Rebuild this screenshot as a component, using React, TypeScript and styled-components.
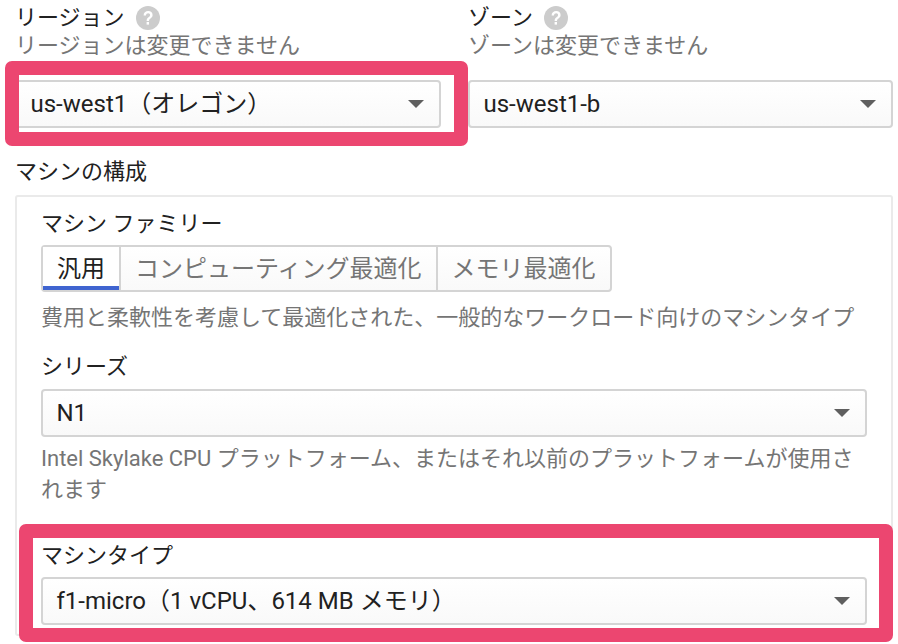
import React from "react";
import styled, { createGlobalStyle } from "styled-components";

const Global = createGlobalStyle`
  html, body { margin: 0; padding: 0; background: #fff; }
  body { font-family: Roboto, "Noto Sans CJK JP", sans-serif; color: #212121; }
  #root { width: 898px; height: 644px; overflow: hidden; }
`;

const Page = styled.div`
  width: 898px;
  height: 644px;
  box-sizing: border-box;
  padding: 5px 5px 0 15px;
  overflow: hidden;
`;

const TopRow = styled.div`
  display: grid;
  grid-template-columns: 426px 425px;
  column-gap: 27px;
`;

const FieldHead = styled.div`
  display: flex;
  align-items: center;
  gap: 11px;
  height: 26px;
`;

const Label = styled.div<{ $mt?: number; $mb?: number }>`
  font-size: 22px;
  line-height: 26px;
  height: 26px;
  white-space: nowrap;
  margin-top: ${(p) => p.$mt ?? 0}px;
  margin-bottom: ${(p) => p.$mb ?? 0}px;
`;

const Help = styled.div<{ $mt?: number }>`
  font-size: 22px;
  line-height: 31px;
  color: #757575;
  margin-top: ${(p) => p.$mt ?? 0}px;
`;

const SelectBox = styled.div<{ $mt?: number }>`
  position: relative;
  box-sizing: border-box;
  height: 48px;
  margin-top: ${(p) => p.$mt ?? 0}px;
  padding: 0 50px 0 13.5px;
  display: flex;
  align-items: center;
  border: 2px solid #d4d4d4;
  border-radius: 4px;
  background: linear-gradient(#ffffff, #f9f9f9);
  font-size: 24px;
  line-height: 28px;
  white-space: nowrap;
`;

const Caret = styled.svg`
  position: absolute;
  right: 15px;
  top: 18px;
  width: 16px;
  height: 8px;
  fill: #5f5f5f;
`;

const Panel = styled.div`
  box-sizing: border-box;
  margin-top: 10px;
  width: 878px;
  height: 441px;
  border: 2px solid #eaeaea;
  border-radius: 3px;
  padding: 14px 24px 0 24px;
`;

const Tabs = styled.div`
  display: inline-flex;
  margin-top: 8px;
  height: 47px;
  box-sizing: border-box;
  border: 2px solid #d4d4d4;
  border-radius: 4px;
  background: linear-gradient(#ffffff, #f9f9f9);
  vertical-align: top;
`;

const Tab = styled.div<{ $active?: boolean }>`
  position: relative;
  box-sizing: border-box;
  height: 100%;
  padding: 0 14px;
  display: flex;
  align-items: center;
  font-size: 24px;
  line-height: 28px;
  white-space: nowrap;
  color: ${(p) => (p.$active ? "#212121" : "#757575")};
  background: ${(p) => (p.$active ? "#fff" : "transparent")};
  border-left: ${(p) => (p.$active ? "none" : "2px solid #d4d4d4")};
  box-shadow: ${(p) => (p.$active ? "inset 0 -4px 0 #3f64d0" : "none")};
`;

const TabsLine = styled.div`
  height: 65px;
`;

const HighlightWrap = styled.div`
  position: relative;
`;

const Highlight = styled.div<{ $t: number; $r: number; $b: number; $l: number }>`
  position: absolute;
  top: ${(p) => p.$t}px;
  right: ${(p) => p.$r}px;
  bottom: ${(p) => p.$b}px;
  left: ${(p) => p.$l}px;
  box-sizing: border-box;
  border: 14px solid #ec4670;
  border-radius: 7px;
  pointer-events: none;
`;

const HelpCircle = () => (
  <svg width="24" height="24" viewBox="0 0 24 24">
    <circle cx="12" cy="12" r="12" fill="#cccccc" />
    <path
      d="M7.6 9.4c0-2.6 2-4.4 4.6-4.4 2.6 0 4.4 1.6 4.4 3.9 0 1.7-.9 2.6-2.1 3.5-1.2.9-1.5 1.3-1.5 2.6h-2.4c0-2 .6-2.8 1.9-3.8 1.1-.8 1.6-1.3 1.6-2.2 0-1-.8-1.7-1.9-1.7-1.2 0-2.1.8-2.2 2.1z"
      fill="#fff"
    />
    <rect x="10.6" y="16" width="2.4" height="2.6" fill="#fff" />
  </svg>
);

const Select = ({ children, mt }: { children: React.ReactNode; mt?: number }) => (
  <SelectBox $mt={mt}>
    {children}
    <Caret viewBox="0 0 16 8">
      <path d="M0 0h16L8 8z" />
    </Caret>
  </SelectBox>
);

export default function App() {
  return (
    <>
      <Global />
      <Page>
        <TopRow>
          <div>
            <FieldHead>
              <Label>リージョン</Label>
              <HelpCircle />
            </FieldHead>
            <Help $mt={-1}>リージョンは変更できません</Help>
            <HighlightWrap>
              <Select mt={19}>us-west1（オレゴン）</Select>
              <Highlight $t={-19} $r={-27} $b={-18} $l={-10} />
            </HighlightWrap>
          </div>
          <div>
            <FieldHead>
              <Label>ゾーン</Label>
              <HelpCircle />
            </FieldHead>
            <Help $mt={-1}>ゾーンは変更できません</Help>
            <Select mt={19}>us-west1-b</Select>
          </div>
        </TopRow>
        <Label $mt={31}>マシンの構成</Label>
        <Panel>
          <Label>マシン ファミリー</Label>
          <TabsLine>
            <Tabs>
              <Tab $active>汎用</Tab>
              <Tab>コンピューティング最適化</Tab>
              <Tab>メモリ最適化</Tab>
            </Tabs>
          </TabsLine>
          <Help>費用と柔軟性を考慮して最適化された、一般的なワークロード向けのマシンタイプ</Help>
          <Label $mt={21}>シリーズ</Label>
          <Select mt={9}>N1</Select>
          <Help $mt={6}>Intel Skylake CPU プラットフォーム、またはそれ以前のプラットフォームが使用されます</Help>
          <HighlightWrap>
            <Label $mt={38}>マシンタイプ</Label>
            <Select mt={8}>f1-micro（1 vCPU、614 MB メモリ）</Select>
            <Highlight $t={-19} $r={-26} $b={-17} $l={-22} />
          </HighlightWrap>
        </Panel>
      </Page>
    </>
  );
}
